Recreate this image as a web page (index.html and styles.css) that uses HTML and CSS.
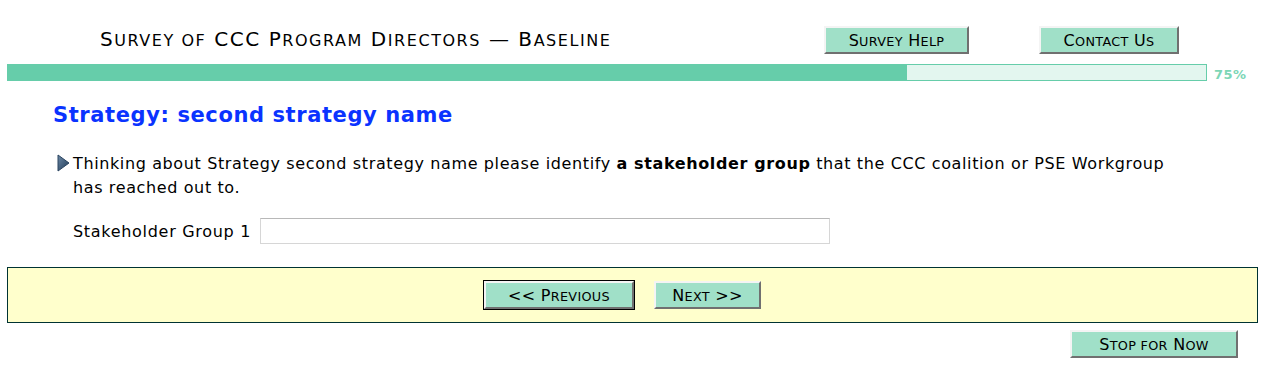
FILE: index.html
```html
<!DOCTYPE html>
<html lang="en">
<head>
  <meta charset="UTF-8" />
  <title>Survey of CCC Program Directors - Baseline</title>
  <link rel="stylesheet" href="styles.css">
</head>
<body>
  <div class="header">
    <div class="survey-title sc">S<span>urvey of</span> CCC P<span>rogram</span> D<span>irectors</span> &mdash; B<span>aseline</span></div>
    <button class="btn sc help-btn">S<span>urvey</span> H<span>elp</span></button>
    <button class="btn sc contact-btn">C<span>ontact</span> U<span>s</span></button>
  </div>

  <div class="progress-row">
    <div class="progress">
      <div class="progress-fill" style="width: 75%;"></div>
    </div>
    <span class="progress-text">75%</span>
  </div>

  <h2 class="section-title">Strategy: second strategy name</h2>

  <div class="question">
    <svg class="q-arrow" width="13" height="18" viewBox="0 0 13 18">
      <defs>
        <linearGradient id="arrowShade" x1="0" y1="0" x2="1" y2="1">
          <stop offset="0" stop-color="#6d89a6" />
          <stop offset="1" stop-color="#1f3a56" />
        </linearGradient>
      </defs>
      <polygon points="1,1 12,9 1,17" fill="url(#arrowShade)" stroke="#2b4460" stroke-width="1" />
    </svg>
    <p class="q-text">Thinking about Strategy second strategy name please identify <b>a stakeholder group</b> that the CCC coalition or PSE Workgroup has reached out to.</p>
  </div>

  <div class="field-row">
    <label for="group1">Stakeholder Group 1</label>
    <input type="text" id="group1" />
  </div>

  <div class="nav-box">
    <button class="btn sc nav-btn prev-btn">&lt;&lt; P<span>revious</span></button>
    <button class="btn sc nav-btn next-btn">N<span>ext</span> &gt;&gt;</button>
  </div>

  <div class="stop-row">
    <button class="btn sc stop-btn">S<span>top for</span> N<span>ow</span></button>
  </div>
</body>
</html>
```

FILE: styles.css
```css
body {
  margin: 0;
  font-family: "DejaVu Sans", Verdana, sans-serif;
  color: #000;
  background: #fff;
}
/* hand-made small caps, the browser's own come out too small */
.sc span {
  text-transform: uppercase;
  font-size: 0.8em;
}
.header {
  display: flex;
  align-items: flex-start;
  height: 64px;
}
.survey-title {
  font-size: 20px;
  margin: 28px 0 0 100px;
  width: 724px;
  letter-spacing: 1.55px;
  line-height: 22px;
}
.btn {
  font-family: "DejaVu Sans", Verdana, sans-serif;
  font-size: 16px;
  color: #000;
  background-color: #a0e0c8;
  border: 2px solid;
  border-color: #f4f4f4 #707070 #707070 #f4f4f4;
  padding: 0;
  height: 28px;
  cursor: pointer;
  letter-spacing: 0.3px;
}
.help-btn {
  width: 145px;
  margin-top: 26px;
}
.contact-btn {
  width: 140px;
  margin: 26px 0 0 70px;
}
.progress-row {
  display: flex;
  align-items: center;
  margin-left: 7px;
  height: 17px;
}
.progress {
  width: 1198px;
  height: 15px;
  border: 1px solid #66cdaa;
  background: #e3f6ef;
}
.progress-fill {
  height: 100%;
  background: #66cdaa;
}
.progress-text {
  color: #7dd6b6;
  font-weight: bold;
  font-size: 13px;
  letter-spacing: 0.5px;
  margin-left: 7px;
  margin-top: 3px;
}
.section-title {
  color: #0a33ff;
  font-size: 21px;
  font-weight: bold;
  margin: 22px 0 0 53px;
  letter-spacing: 0.6px;
}
.question {
  display: flex;
  align-items: flex-start;
  margin: 25px 0 0 57px;
}
.q-arrow {
  margin-top: 2px;
  flex: none;
}
.q-text {
  margin: 0 0 0 3px;
  width: 1115px;
  font-size: 16px;
  letter-spacing: 0.62px;
  line-height: 24px;
}
.field-row {
  display: flex;
  align-items: center;
  margin: 18px 0 0 73px;
}
.field-row label {
  font-size: 16px;
  letter-spacing: 0.7px;
  width: 187px;
}
.field-row input {
  width: 570px;
  height: 26px;
  box-sizing: border-box;
  border: 1px solid #d6d6d6;
  border-top-color: #b8b8b8;
  padding: 2px 4px;
}
.nav-box {
  display: flex;
  justify-content: center;
  align-items: center;
  gap: 20px;
  margin: 23px 0 0 7px;
  width: 1229px;
  height: 54px;
  background: #ffffcc;
  border: 1px solid #003333;
  padding-right: 20px;
}
.prev-btn {
  width: 150px;
  outline: 1px solid #000;
}
.next-btn {
  width: 107px;
}
.stop-row {
  display: flex;
  justify-content: flex-end;
  margin: 7px 49px 0 0;
}
.stop-btn {
  width: 168px;
}
```
